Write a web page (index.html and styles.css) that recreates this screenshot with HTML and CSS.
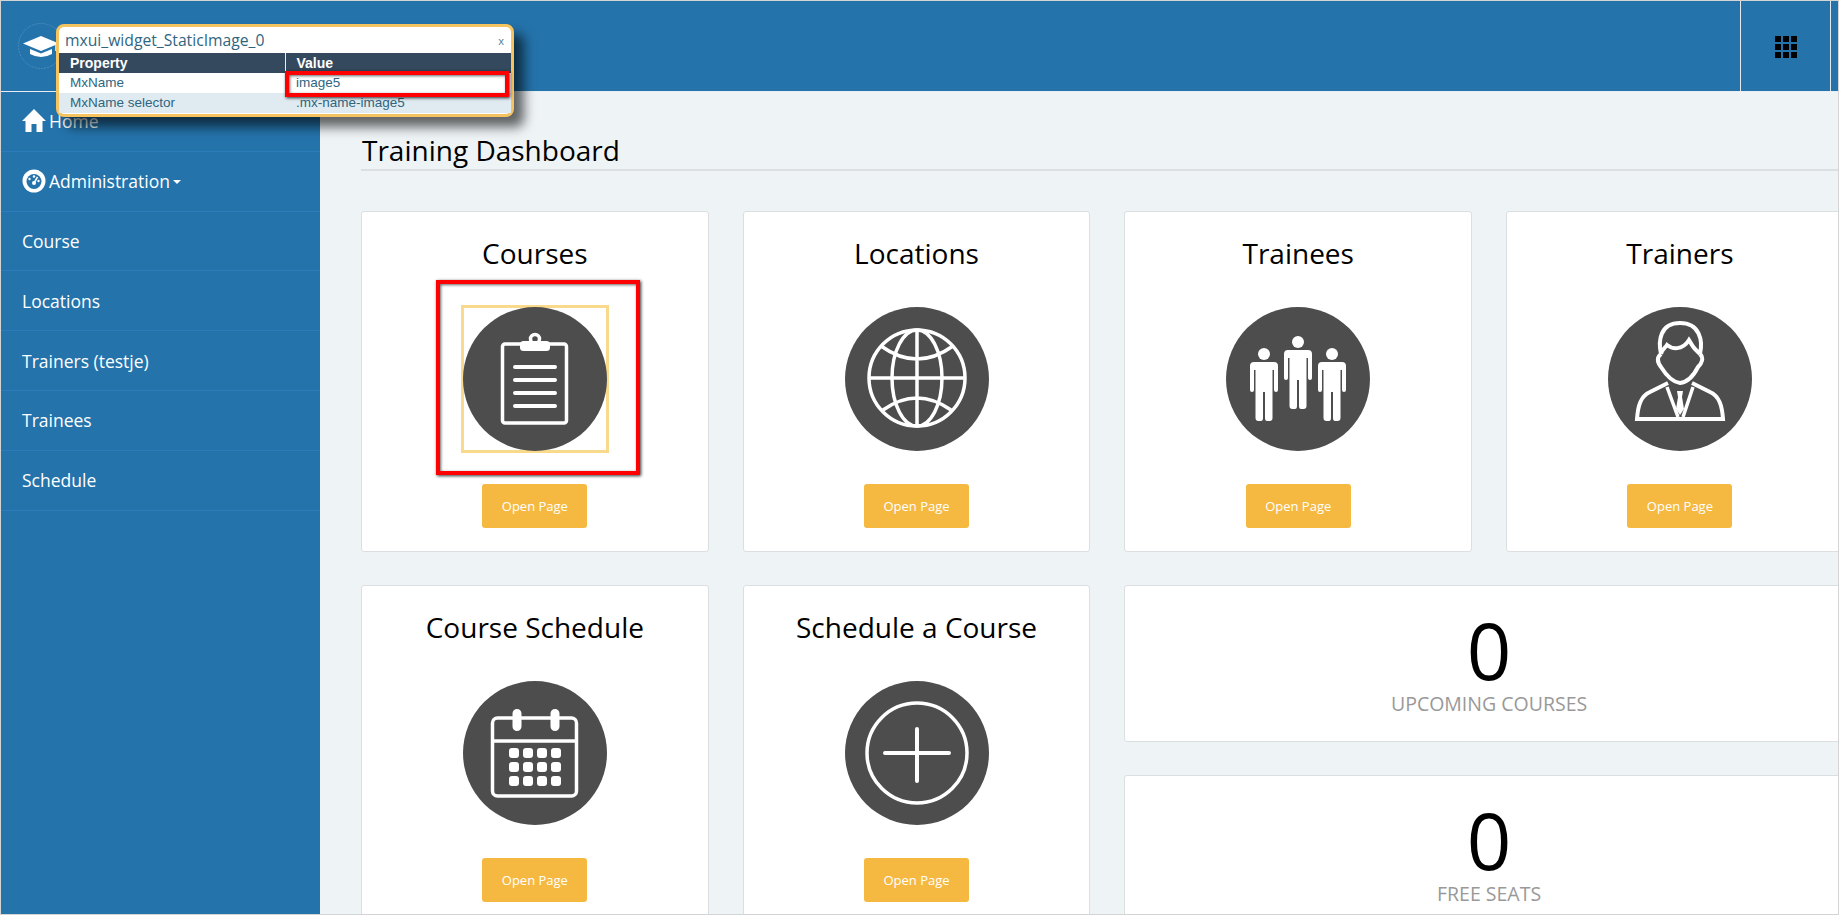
FILE: index.html
```html
<!DOCTYPE html>
<html lang="en">

<head>
    <meta charset="UTF-8">
    <meta name="viewport" content="width=device-width, initial-scale=1.0">
    <title>Training Dashboard</title>
    <link rel="stylesheet" href="styles.css">
</head>

<body>
    <div class="app">
        <header class="topbar">
            <div class="logo">
                <svg width="48" height="48" viewBox="0 0 48 48">
                    <circle class="logo-ring" cx="24" cy="24" r="22.5" />
                    <path class="white" d="M24 14 L42 21.5 L24 29 L6 21.5Z" />
                    <path class="white" d="M13 27 L24 31.5 L35 27 V32 Q24 38 13 32Z" />
                    <path class="logo-tassel" d="M39 23 V29" />
                </svg>
            </div>
            <div class="topbar-fill"></div>
            <div class="apps">
                <div class="apps-grid">
                    <i></i><i></i><i></i><i></i><i></i><i></i><i></i><i></i><i></i>
                </div>
            </div>
            <div class="topbar-end"></div>
        </header>

        <div class="body-row">
            <nav class="sidebar">
                <a class="nav-item">
                    <svg class="nav-icon" width="24" height="24" viewBox="0 0 24 24">
                        <path class="white" d="M12 0 L24 12 H20.5 V23 H14.5 V15 H9.5 V23 H3.5 V12 H0Z" />
                    </svg>
                    Home
                </a>
                <a class="nav-item">
                    <svg class="nav-icon" width="24" height="24" viewBox="0 0 24 24">
                        <circle class="white" cx="12" cy="12" r="11.5" />
                        <circle class="gauge-face" cx="12" cy="12.5" r="7.5" />
                        <path class="gauge-needle" d="M12 14 L15.5 8" />
                        <circle class="white" cx="12" cy="7.5" r="1.2" />
                        <circle class="white" cx="7.5" cy="10" r="1.2" />
                        <circle class="white" cx="16.5" cy="12" r="1.2" />
                        <circle class="white" cx="12" cy="14" r="2" />
                    </svg>
                    Administration<span class="caret"></span>
                </a>
                <a class="nav-item">Course</a>
                <a class="nav-item">Locations</a>
                <a class="nav-item">Trainers (testje)</a>
                <a class="nav-item">Trainees</a>
                <a class="nav-item">Schedule</a>
            </nav>

            <main class="content">
                <h1 class="page-title">Training Dashboard</h1>
                <div class="dashboard">
                    <section class="card">
                        <h2>Courses</h2>
                        <svg class="round-icon" width="144" height="144" viewBox="0 0 144 144">
                            <circle class="disc" cx="72" cy="72" r="72" />
                            <rect class="line" x="39.5" y="37" width="64" height="79" rx="2.5" />
                            <circle class="line" cx="72" cy="32" r="4.5" />
                            <rect class="white" x="57" y="34" width="30" height="10" rx="3.5" />
                            <path class="line thick" d="M52 60 H92 M52 73 H92 M52 86 H92 M52 99 H92" />
                        </svg>
                        <div class="highlight"></div>
                        <div class="red-box"></div>
                        <button class="open-btn">Open Page</button>
                    </section>

                    <section class="card">
                        <h2>Locations</h2>
                        <svg class="round-icon" width="144" height="144" viewBox="0 0 144 144">
                            <circle class="disc" cx="72" cy="72" r="72" />
                            <circle class="line" cx="72" cy="71" r="48" />
                            <ellipse class="line" cx="72" cy="71" rx="25" ry="48" />
                            <path class="line" d="M72 23 V119 M24 71 H120 M36 39 Q72 65 108 39 M38 103 Q72 79 106 103" />
                        </svg>
                        <button class="open-btn">Open Page</button>
                    </section>

                    <section class="card">
                        <h2>Trainees</h2>
                        <svg class="round-icon" width="144" height="144" viewBox="0 0 144 144">
                            <defs>
                                <g id="person">
                                    <circle class="white" cx="0" cy="0" r="6" />
                                    <path class="white" d="M-10 8 H10 Q14 8 14 12 V36 Q14 38 12 38 Q10 38 10 36 V16 H8.5 V64 Q8.5 67 5.5 67 H3 Q1 67 1 64 V38 H-1 V64 Q-1 67 -3 67 H-5.5 Q-8.5 67 -8.5 64 V16 H-10 V36 Q-10 38 -12 38 Q-14 38 -14 36 V12 Q-14 8 -10 8Z" />
                                </g>
                            </defs>
                            <circle class="disc" cx="72" cy="72" r="72" />
                            <use href="#person" x="38" y="47" />
                            <use href="#person" x="72" y="35" />
                            <use href="#person" x="106" y="47" />
                        </svg>
                        <button class="open-btn">Open Page</button>
                    </section>

                    <section class="card">
                        <h2>Trainers</h2>
                        <svg class="round-icon" width="144" height="144" viewBox="0 0 144 144">
                            <circle class="disc" cx="72" cy="72" r="72" />
                            <path class="line bold" d="M53 47 C50 34 52 16 72 16 C92 16 95 34 92 47" />
                            <path class="line bold" d="M53 47 C54 42 57 41 59 38 C64 42 74 44 81 33 C83 36 84 39 87 42 L92 47" />
                            <path class="line bold" d="M53 47 C48 51 50 56 53 60 C58 68 64 75 72 76 C80 75 86 68 90 60 C94 56 96 51 92 47" />
                            <path class="line bold" d="M60 76 L42 85 C33 89 30 98 29 112 H115 C114 98 111 89 102 85 L84 76" />
                            <path class="line" d="M59 80 L70 110 M85 80 L75 110" />
                            <path class="white" d="M69 84 H75 L74 90 L76 102 L72 108 L68 102 L70 90Z" />
                        </svg>
                        <button class="open-btn">Open Page</button>
                    </section>

                    <section class="card">
                        <h2>Course Schedule</h2>
                        <svg class="round-icon" width="144" height="144" viewBox="0 0 144 144">
                            <circle class="disc" cx="72" cy="72" r="72" />
                            <rect class="line" x="29.500" y="37" width="84" height="78" rx="5" />
                            <path class="line" d="M29 60 H114" />
                            <path class="ring" d="M54 32.500 V45.500 M92 32.500 V45.500" />
                            <g class="white">
                                <rect x="46" y="67" width="10" height="10" rx="3" /><rect x="60" y="67" width="10" height="10" rx="3" /><rect x="74" y="67" width="10" height="10" rx="3" /><rect x="88" y="67" width="10" height="10" rx="3" />
                                <rect x="46" y="81" width="10" height="10" rx="3" /><rect x="60" y="81" width="10" height="10" rx="3" /><rect x="74" y="81" width="10" height="10" rx="3" /><rect x="88" y="81" width="10" height="10" rx="3" />
                                <rect x="46" y="95" width="10" height="10" rx="3" /><rect x="60" y="95" width="10" height="10" rx="3" /><rect x="74" y="95" width="10" height="10" rx="3" /><rect x="88" y="95" width="10" height="10" rx="3" />
                            </g>
                        </svg>
                        <button class="open-btn">Open Page</button>
                    </section>

                    <section class="card">
                        <h2>Schedule a Course</h2>
                        <svg class="round-icon" width="144" height="144" viewBox="0 0 144 144">
                            <circle class="disc" cx="72" cy="72" r="72" />
                            <circle class="line" cx="72" cy="72" r="50" />
                            <path class="line thick" d="M72 48 V100 M40 72 H104" />
                        </svg>
                        <button class="open-btn">Open Page</button>
                    </section>

                    <div class="stats">
                        <section class="stat">
                            <div class="stat-num">0</div>
                            <div class="stat-label">UPCOMING COURSES</div>
                        </section>
                        <section class="stat">
                            <div class="stat-num">0</div>
                            <div class="stat-label">FREE SEATS</div>
                        </section>
                    </div>
                </div>
            </main>
        </div>

        <!-- inspector popup over the page -->
        <div class="inspector">
            <div class="inspector-head">
                <span>mxui_widget_StaticImage_0</span>
                <span class="inspector-close">x</span>
            </div>
            <table class="inspector-table">
                <tr>
                    <th>Property</th>
                    <th>Value</th>
                </tr>
                <tr>
                    <td>MxName</td>
                    <td>image5</td>
                </tr>
                <tr class="alt">
                    <td>MxName selector</td>
                    <td>.mx-name-image5</td>
                </tr>
            </table>
            <div class="inspector-mark"></div>
        </div>
    </div>
</body>

</html>
```

FILE: styles.css
```css
* {
    box-sizing: border-box;
}

html,
body {
    margin: 0;
    height: 100%;
    overflow: hidden;
}

body {
    font-family: "Open Sans", "Noto Sans", sans-serif;
    color: #000;
    background-color: #fff;
}

.white {
    fill: #fff;
}

.app {
    position: relative;
    width: 1839px;
    height: 915px;
    display: flex;
    flex-direction: column;
    border: 1px solid #d4d4d4;
    overflow: hidden;
}

/* top bar */
.topbar {
    display: flex;
    flex: none;
    height: 91px;
    background-color: #2473ab;
    border-bottom: 1px solid #e8eef2;
}

.logo {
    width: 319px;
    padding: 21px 0 0 16px;
}

.logo-ring {
    fill: none;
    stroke: #4b8cbb;
    stroke-width: 1;
    stroke-dasharray: 2 1;
}

.logo-tassel {
    stroke: #fff;
    stroke-width: 1.5;
    fill: none;
}

.topbar-fill {
    flex: 1;
}

.apps {
    width: 91px;
    flex: none;
    display: flex;
    align-items: center;
    justify-content: center;
    border-left: 1px solid #e1e7ea;
    border-right: 1px solid #e1e7ea;
}

.apps-grid {
    display: grid;
    grid-template-columns: repeat(3, 6px);
    gap: 2px;
    margin-top: 1px;
}

.apps-grid i {
    height: 6px;
    background-color: #000;
}

.topbar-end {
    width: 7px;
    flex: none;
}

/* sidebar */
.body-row {
    display: flex;
    flex: 1;
    min-height: 0;
}

.sidebar {
    width: 319px;
    flex: none;
    background-color: #2473ab;
}

.nav-item {
    display: flex;
    align-items: center;
    height: 59.8px;
    padding-left: 21px;
    font-size: 17.5px;
    color: #fff;
    border-bottom: 1px solid #2a7cba;
}

.nav-icon {
    margin-right: 3px;
}

.gauge-face {
    fill: #2473ab;
}

.gauge-needle {
    stroke: #fff;
    stroke-width: 1.5;
}

.caret {
    width: 0;
    height: 0;
    margin: 2px 0 0 3px;
    border-left: 4.5px solid transparent;
    border-right: 4.5px solid transparent;
    border-top: 4.5px solid #fff;
}

/* main area */
.content {
    flex: 1;
    min-width: 0;
    padding: 41px 0 0 41px;
    background-color: #eef3f6;
    overflow: hidden;
}

.page-title {
    margin: 0 0 40px;
    height: 38px;
    padding-left: 1px;
    font-size: 28px;
    line-height: 34px;
    font-weight: 400;
    border-bottom: 2px solid #dcdfe1;
}

.dashboard {
    display: grid;
    grid-template-columns: repeat(4, 347.7px);
    grid-auto-rows: 341px;
    gap: 33px 34px;
}

.card {
    position: relative;
    display: flex;
    flex-direction: column;
    align-items: center;
    padding-top: 23px;
    background-color: #fff;
    border: 1px solid #dcdfe1;
    border-radius: 3px;
}

.card h2 {
    margin: 0 0 36px;
    height: 36px;
    font-size: 28px;
    line-height: 36px;
    font-weight: 400;
}

.round-icon {
    position: relative;
    z-index: 1;
    display: block;
    flex: none;
}

.disc {
    fill: #4d4d4d;
}

.line {
    fill: none;
    stroke: #fff;
    stroke-width: 3.5;
}

.bold {
    stroke-width: 4;
}

.thick {
    stroke-width: 4;
    stroke-linecap: round;
}

.ring {
    fill: none;
    stroke: #fff;
    stroke-width: 9;
    stroke-linecap: round;
}

.open-btn {
    flex: none;
    width: 105px;
    height: 44px;
    margin-top: 33px;
    padding: 0;
    font-family: inherit;
    font-size: 13px;
    color: #fff;
    background-color: #f5b942;
    border: none;
    border-radius: 3px;
}

.highlight {
    position: absolute;
    left: 99px;
    top: 93px;
    width: 148px;
    height: 148px;
    border: 3px solid #f9d98c;
    pointer-events: none;
}

.red-box {
    position: absolute;
    left: 74px;
    top: 68px;
    width: 204px;
    height: 195px;
    border: 4px solid #f00;
    box-shadow: 1px 1px 3px rgba(0, 0, 0, 0.8), inset 1px 1px 3px rgba(0, 0, 0, 0.6);
}

.stats {
    grid-column: span 2;
    display: flex;
    flex-direction: column;
    gap: 33px;
}

.stat {
    flex: none;
    height: 157px;
    display: flex;
    flex-direction: column;
    align-items: center;
    padding-top: 22px;
    background-color: #fff;
    border: 1px solid #dcdfe1;
    border-radius: 3px;
}

.stat-num {
    height: 84px;
    font-size: 78px;
    line-height: 84px;
}

.stat-label {
    font-size: 19.5px;
    line-height: 24px;
    color: #999;
}

/* inspector popup */
.inspector {
    position: absolute;
    left: 55px;
    top: 23px;
    width: 458px;
    height: 93px;
    background-color: #fff;
    border: 3px solid #f5c35f;
    border-radius: 8px;
    box-shadow: 10px 10px 12px rgba(0, 0, 0, 0.6);
    font-family: "Liberation Sans", Arial, sans-serif;
    color: #2f657f;
}

.inspector-head {
    display: flex;
    justify-content: space-between;
    align-items: center;
    height: 26px;
    padding: 0 7px 0 6px;
    font-family: "Open Sans", "Noto Sans", sans-serif;
    font-size: 15.7px;
}

.inspector-close {
    font-size: 11px;
    color: #4d7d96;
}

.inspector-table {
    width: 100%;
    table-layout: fixed;
    border-collapse: collapse;
    font-size: 13.5px;
}

.inspector-table th {
    height: 20px;
    padding: 0 0 0 11px;
    text-align: left;
    font-size: 14px;
    color: #fff;
    background-color: #34495e;
}

.inspector-table th:first-child {
    border-right: 1px solid #e8eef2;
}

.inspector-table th:first-child,
.inspector-table td:first-child {
    width: 226px;
}

.inspector-table td {
    height: 20px;
    padding: 0 0 2px 11px;
}

.inspector-table .alt td {
    background-color: #dfebf1;
}

.inspector-mark {
    position: absolute;
    left: 226px;
    top: 44px;
    width: 224px;
    height: 26px;
    border: 4px solid #f00;
    box-shadow: 1px 1px 3px rgba(0, 0, 0, 0.8), inset 1px 1px 3px rgba(0, 0, 0, 0.6);
}
```
